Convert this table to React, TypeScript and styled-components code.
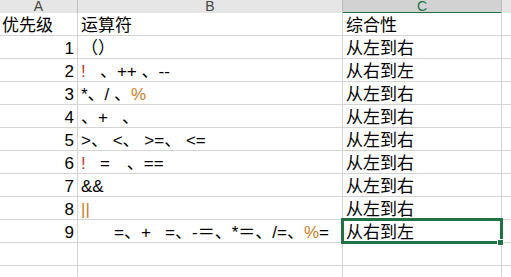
import React from 'react';
import styled, { createGlobalStyle } from 'styled-components';

const Global = createGlobalStyle`
  html, body { margin: 0; padding: 0; background: #fff; overflow: hidden; }
`;

const COLS = '77px 264px 158px 40px';

const Sheet = styled.div`
  width: 511px;
  height: 277px;
  overflow: hidden;
  font-family: "Liberation Sans", "Noto Sans CJK SC", sans-serif;
`;

const HeaderRow = styled.div`
  display: grid;
  grid-template-columns: ${COLS};
  column-gap: 1px;
  height: 13px;
  background: #bdbdbd;
`;

const HeaderCell = styled.div<{ $active?: boolean }>`
  box-sizing: border-box;
  display: flex;
  align-items: flex-start;
  justify-content: center;
  background: ${(p) => (p.$active ? '#d2d2d2' : '#e6e6e6')};
  color: ${(p) => (p.$active ? '#217346' : '#444')};
  border-bottom: ${(p) => (p.$active ? '2px solid #217346' : '1px solid #c6c6c6')};
  font-size: 14px;
  line-height: 12px;
`;

const Body = styled.div`
  display: grid;
  grid-template-columns: ${COLS};
  grid-auto-rows: 22px;
  gap: 1px;
  background: #d4d4d4;
`;

const Cell = styled.div<{ $align?: 'left' | 'right'; $pad?: number; $selected?: boolean }>`
  position: relative;
  z-index: ${(p) => (p.$selected ? 1 : 0)};
  display: flex;
  align-items: flex-end;
  justify-content: ${(p) => (p.$align === 'right' ? 'flex-end' : 'flex-start')};
  padding: 0 ${(p) => p.$pad ?? 3}px;
  background: #fff;
  color: #000;
  font-size: 17px;
  line-height: 18px;
  white-space: pre;
  &::before {
    content: '';
    display: ${(p) => (p.$selected ? 'block' : 'none')};
    position: absolute;
    inset: -2px;
    border: 3px solid #217346;
    pointer-events: none;
  }
`;

const Handle = styled.span`
  position: absolute;
  right: -3px;
  bottom: -4px;
  width: 5px;
  height: 5px;
  background: #217346;
  border: 1px solid #fff;
`;

const Mark = styled.span<{ $tone: 'red' | 'orange' }>`
  color: ${(p) => (p.$tone === 'red' ? '#c8372d' : '#c97d2a')};
`;

type Row = {
  a: string;
  aLeft?: boolean;
  b: React.ReactNode;
  c: string;
  selected?: boolean;
};

const rows: Row[] = [
  { a: '优先级', aLeft: true, b: '运算符', c: '综合性' },
  { a: '1', b: '（）', c: '从左到右' },
  { a: '2', b: (<><Mark $tone="red">!</Mark>{'   、++ 、--'}</>), c: '从右到左' },
  { a: '3', b: (<>{'*、/ 、'}<Mark $tone="orange">%</Mark></>), c: '从左到右' },
  { a: '4', b: '、+   、', c: '从左到右' },
  { a: '5', b: '>、 <、 >=、 <=', c: '从左到右' },
  { a: '6', b: (<><Mark $tone="red">!</Mark>{'   =　、=='}</>), c: '从左到右' },
  { a: '7', b: '&&', c: '从左到右' },
  { a: '8', b: <Mark $tone="orange">||</Mark>, c: '从左到右' },
  {
    a: '9',
    b: (<>{'       =、+   =、-＝、*＝、/=、'}<Mark $tone="orange">%</Mark>{'='}</>),
    c: '从右到左',
    selected: true,
  },
];

export default function App() {
  return (
    <>
      <Global />
      <Sheet>
        <HeaderRow>
          <HeaderCell>A</HeaderCell>
          <HeaderCell>B</HeaderCell>
          <HeaderCell $active>C</HeaderCell>
          <HeaderCell />
        </HeaderRow>
        <Body>
          {rows.map((r, i) => (
            <React.Fragment key={i}>
              <Cell $align={r.aLeft ? 'left' : 'right'} $pad={r.aLeft ? 2 : 3}>{r.a}</Cell>
              <Cell>{r.b}</Cell>
              <Cell $pad={3} $selected={r.selected}>
                {r.c}
                {r.selected && <Handle />}
              </Cell>
              <Cell />
            </React.Fragment>
          ))}
          {[0, 1].map((k) => (
            <React.Fragment key={`e${k}`}>
              <Cell />
              <Cell />
              <Cell />
              <Cell />
            </React.Fragment>
          ))}
        </Body>
      </Sheet>
    </>
  );
}
